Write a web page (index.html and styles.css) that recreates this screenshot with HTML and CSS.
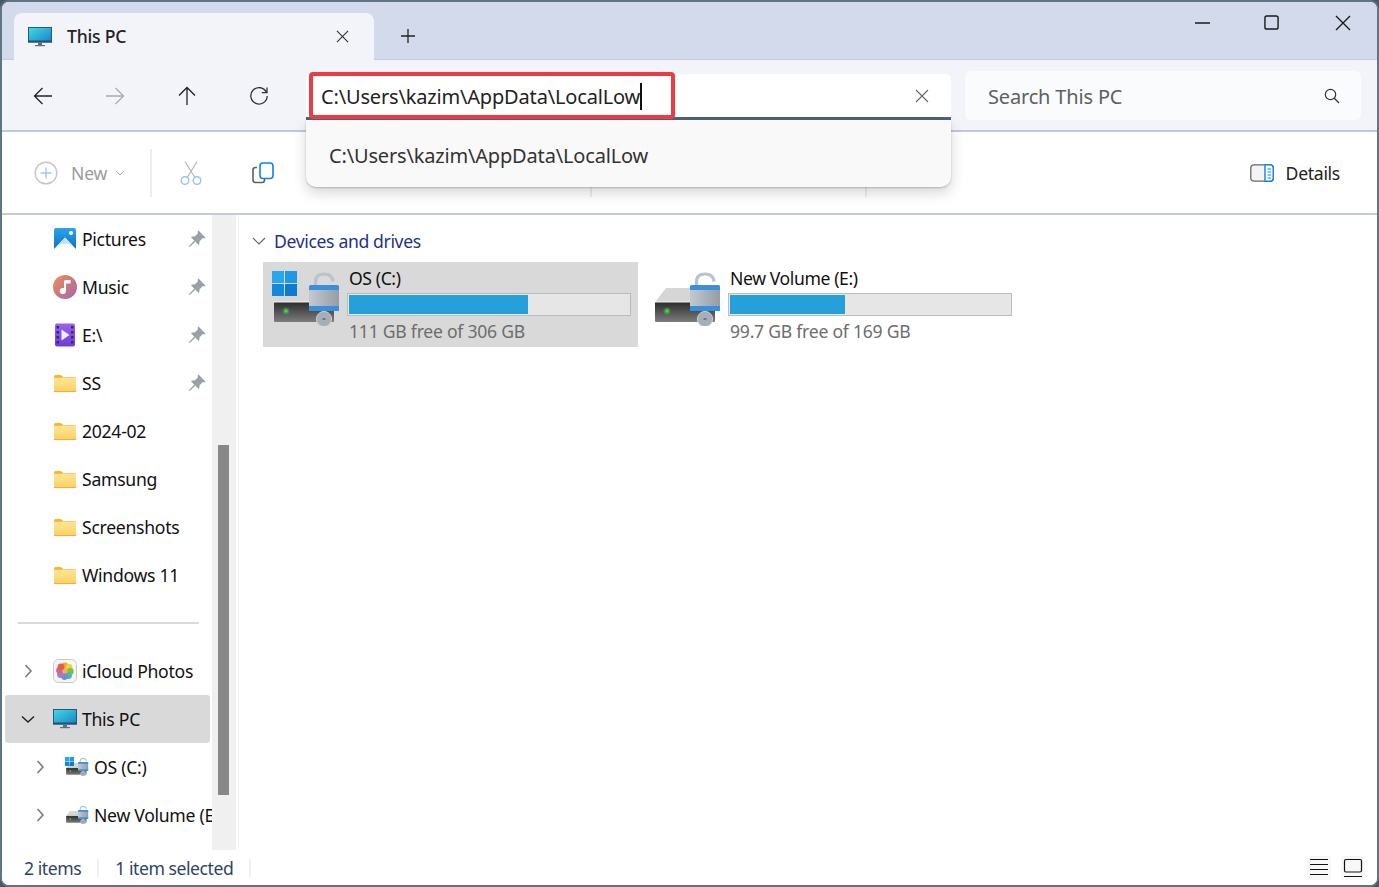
FILE: index.html
```html
<!DOCTYPE html>
<html>
<head>
  <meta charset="utf-8">
  <title>This PC</title>
  <link rel="stylesheet" href="styles.css">
</head>
<body>
  <svg class="defs" width="0" height="0">
    <defs>
      <linearGradient id="screen" x1="0" y1="0" x2="1" y2="1">
        <stop offset="0" stop-color="#3fdcea"/><stop offset="1" stop-color="#1a7fc6"/>
      </linearGradient>
      <linearGradient id="folderFill" x1="0" y1="0" x2="0" y2="1">
        <stop offset="0" stop-color="#ffe596"/><stop offset="1" stop-color="#fdcf60"/>
      </linearGradient>
      <linearGradient id="picFill" x1="0" y1="0" x2="0" y2="1">
        <stop offset="0" stop-color="#2aa5ea"/><stop offset="1" stop-color="#0e6cc6"/>
      </linearGradient>
      <linearGradient id="musicFill" x1="0" y1="0" x2="1" y2="1">
        <stop offset="0" stop-color="#f28f52"/><stop offset="1" stop-color="#a264b0"/>
      </linearGradient>
      <linearGradient id="filmFill" x1="0" y1="0" x2="0" y2="1">
        <stop offset="0" stop-color="#9a62ea"/><stop offset="1" stop-color="#6c3fd2"/>
      </linearGradient>
      <linearGradient id="driveFront" x1="0" y1="0" x2="0" y2="1">
        <stop offset="0" stop-color="#2b2b2b"/><stop offset="1" stop-color="#7d7d7d"/>
      </linearGradient>
      <linearGradient id="lockBody" x1="0" y1="0" x2="1" y2="0">
        <stop offset="0" stop-color="#c2cad1"/><stop offset="1" stop-color="#939da7"/>
      </linearGradient>

      <symbol id="monitor" viewBox="0 0 24 20">
        <rect x="0.5" y="0.5" width="23" height="14.5" fill="url(#screen)" stroke="#2a5a70"/>
        <rect x="0" y="13.5" width="24" height="2" fill="#1f5570"/>
        <rect x="10" y="15.5" width="4" height="2.5" fill="#5f6f7a"/>
        <rect x="7" y="18" width="10" height="1.2" fill="#5f6f7a"/>
      </symbol>

      <symbol id="folder" viewBox="0 0 22 17">
        <path d="M0 1.5Q0 0 1.5 0H7L9 2H22V5H0Z" fill="#f7b526"/>
        <rect x="0" y="2.5" width="22" height="14.5" fill="url(#folderFill)"/>
        <path d="M0 2.5H7.5L9 1.5H0Z" fill="#f7b526"/>
        <rect x="0" y="16" width="22" height="1" fill="#f0ae2e"/>
      </symbol>

      <symbol id="pin" viewBox="0 0 18 18">
        <path d="M10.5 0.6L17.2 7.2Q17.6 8 16.8 8.2L14.6 8.2L11.4 11.4L11.4 14.2Q11 15 10.2 14.5L3.4 7.7Q3 7 3.7 6.6L6.7 6.6L9.8 3.4L9.8 1Q10 0.2 10.5 0.6Z" fill="#98a1a7"/>
        <path d="M6.2 10.6L7.3 11.7L1.4 17.2L0.7 16.5Z" fill="#98a1a7"/>
      </symbol>

      <symbol id="drive" viewBox="0 0 70 56">
        <path d="M3 32L14 18H50V32Z" fill="#d6d6d6"/>
        <rect x="3" y="32" width="60" height="20" rx="1" fill="url(#driveFront)"/>
        <rect x="2.5" y="31" width="61" height="1.5" fill="#e8e8e8"/>
        <circle cx="15" cy="41" r="3.5" fill="#4fd14f" opacity="0.35"/>
        <circle cx="15" cy="41" r="1.8" fill="#35e035"/>
        <path d="M44.5 16V12C44.5 6 48 4 53 4C58 4 61.5 6 62 11.5" fill="none" stroke="#b9c3cb" stroke-width="3.2"/>
        <rect x="38" y="15" width="30" height="26" rx="2" fill="url(#lockBody)"/>
        <path d="M38 20V17Q38 15 40 15H66Q68 15 68 17V20Z" fill="#3a8fdc"/>
        <path d="M38 36V41H68V36Z" fill="#3a8fdc"/>
        <circle cx="53" cy="49" r="7.6" fill="#a7aeb5"/>
        <circle cx="53" cy="49" r="7.6" fill="none" stroke="#c9ced3"/>
        <rect x="51.5" y="48.4" width="3" height="1.2" fill="#555"/>
      </symbol>

      <symbol id="winlogo" viewBox="0 0 25 25">
        <rect x="0" y="0" width="12" height="12" fill="#2aa6ec"/>
        <rect x="13" y="0" width="12" height="12" fill="#1f98e6"/>
        <rect x="0" y="13" width="12" height="12" fill="#1488dc"/>
        <rect x="13" y="13" width="12" height="12" fill="#0e7bd2"/>
      </symbol>

      <symbol id="chevright" viewBox="0 0 12 16">
        <path d="M3.5 2L9 8L3.5 14" fill="none" stroke="currentColor" stroke-width="1.5"/>
      </symbol>
      <symbol id="chevdown" viewBox="0 0 16 12">
        <path d="M2 3.5L8 9L14 3.5" fill="none" stroke="currentColor" stroke-width="1.5"/>
      </symbol>
    </defs>
  </svg>

  <div class="window">
    <div class="titlebar">
      <div class="tab">
        <svg class="tab-icon"><use href="#monitor"/></svg>
        <span class="tab-name">This PC</span>
        <svg class="tab-close" viewBox="0 0 14 14"><path d="M1 1L13 13M13 1L1 13" stroke="#333" stroke-width="1.2"/></svg>
      </div>
      <svg class="tab-add" viewBox="0 0 14 14"><path d="M7 0V14M0 7H14" stroke="#222" stroke-width="1.3"/></svg>
      <div class="winctl">
        <svg viewBox="0 0 16 16"><path d="M0 8H15" stroke="#1a1a1a" stroke-width="1.4"/></svg>
        <svg class="winctl-max" viewBox="0 0 16 16"><rect x="1" y="1" width="14" height="14" rx="2" fill="none" stroke="#1a1a1a" stroke-width="1.5"/></svg>
        <svg viewBox="0 0 16 16"><path d="M1 1L15 15M15 1L1 15" stroke="#1a1a1a" stroke-width="1.4"/></svg>
      </div>
    </div>

    <div class="navbar">
      <div class="navbtn">
        <svg viewBox="0 0 20 20"><path d="M19 10H1.5M9.5 2L1.5 10L9.5 18" fill="none" stroke="#222" stroke-width="1.3"/></svg>
      </div>
      <div class="navbtn">
        <svg viewBox="0 0 20 20"><path d="M1 10H18.5M10.5 2L18.5 10L10.5 18" fill="none" stroke="#a8acb2" stroke-width="1.3"/></svg>
      </div>
      <div class="navbtn">
        <svg viewBox="0 0 20 20"><path d="M10 19V1.5M2 9.5L10 1.5L18 9.5" fill="none" stroke="#222" stroke-width="1.3"/></svg>
      </div>
      <div class="navbtn">
        <svg viewBox="0 0 20 20"><path d="M17.5 6.5A8.2 8.2 0 1 0 18.2 10M18 1.5V6.7H12.8" fill="none" stroke="#333" stroke-width="1.3"/></svg>
      </div>

      <div class="address">
        <div class="address-field">
          <span class="address-text">C:\Users\kazim\AppData\LocalLow</span><span class="caret"></span>
          <svg class="address-clear" viewBox="0 0 14 14"><path d="M1 1L13 13M13 1L1 13" stroke="#666" stroke-width="1.1"/></svg>
        </div>
        <div class="suggest"><span class="suggest-text">C:\Users\kazim\AppData\LocalLow</span></div>
        <div class="callout"></div>
      </div>

      <div class="search">
        <span class="search-text">Search This PC</span>
        <svg class="search-icon" viewBox="0 0 16 16"><circle cx="6.5" cy="6.5" r="5.2" fill="none" stroke="#333" stroke-width="1.2"/><path d="M10.3 10.3L15 15" stroke="#333" stroke-width="1.3"/></svg>
      </div>
    </div>

    <div class="cmdbar">
      <svg class="cmd-new" viewBox="0 0 24 24"><circle cx="12" cy="12" r="10.8" fill="none" stroke="#c6c6c6" stroke-width="1.4"/><path d="M12 6.5V17.5M6.5 12H17.5" stroke="#9ec7ec" stroke-width="1.4"/></svg>
      <span class="cmd-label">New</span>
      <svg class="cmd-drop" viewBox="0 0 10 6"><path d="M1 1L5 5L9 1" fill="none" stroke="#b0b0b0" stroke-width="1"/></svg>
      <div class="cmd-sep first"></div>
      <svg class="cmd-cut" viewBox="0 0 22 24">
        <path d="M5 0.5L14.5 16M17 0.5L7.5 16" fill="none" stroke="#b5b5b5" stroke-width="1.2"/>
        <circle cx="5" cy="19.5" r="3.8" fill="none" stroke="#92c4ee" stroke-width="1.4"/>
        <circle cx="17" cy="19.5" r="3.8" fill="none" stroke="#92c4ee" stroke-width="1.4"/>
      </svg>
      <svg class="cmd-copy" viewBox="0 0 22 22">
        <path d="M5 5.5H3.5Q1 5.5 1 8V18Q1 20.5 3.5 20.5H10Q12.5 20.5 12.5 18V17" fill="none" stroke="#5f5f5f" stroke-width="1.6"/>
        <rect x="8" y="1" width="13" height="15.5" rx="3" fill="#fff" stroke="#0f83e2" stroke-width="1.6"/>
      </svg>
      <div class="cmd-sep second"></div>
      <div class="cmd-sep third"></div>
      <svg class="cmd-details" viewBox="0 0 24 18">
        <rect x="0.8" y="0.8" width="22.4" height="16.4" rx="3" fill="#f4f4f4" stroke="#666" stroke-width="1.3"/>
        <path d="M15 0.8H20.2Q23.2 0.8 23.2 3.8V14.2Q23.2 17.2 20.2 17.2H15Z" fill="#fff" stroke="#0f83e2" stroke-width="1.4"/>
        <path d="M17.5 5H21M17.5 8H21M17.5 11H21M17.5 14H21" stroke="#0f83e2" stroke-width="1.2"/>
      </svg>
      <span class="cmd-details-label">Details</span>
    </div>

    <div class="main">
      <div class="sidebar">
        <div class="row">
          <span class="chev"></span>
          <svg class="item-icon" viewBox="0 0 24 24">
            <rect x="1" y="1" width="22" height="22" rx="2" fill="url(#picFill)"/>
            <path d="M1 22L12 10.5L23 22Q23 23 22 23H2Q1 23 1 22Z" fill="#fff"/>
            <path d="M5.5 18L12 10.5L18.5 18Q12 15.5 5.5 18Z" fill="#bfe3fa"/>
            <circle cx="18" cy="6" r="2" fill="#fff"/>
          </svg>
          <span class="item-name">Pictures</span>
          <svg class="pin"><use href="#pin"/></svg>
        </div>
        <div class="row">
          <span class="chev"></span>
          <svg class="item-icon" viewBox="0 0 24 24">
            <circle cx="12" cy="12" r="12" fill="url(#musicFill)"/>
            <path d="M12 5.5V15.5" stroke="#fff" stroke-width="2"/>
            <circle cx="9.8" cy="16" r="3.1" fill="#fff"/>
            <path d="M12 5H17.5V8.5H12Z" fill="#fff"/>
          </svg>
          <span class="item-name">Music</span>
          <svg class="pin"><use href="#pin"/></svg>
        </div>
        <div class="row">
          <span class="chev"></span>
          <svg class="item-icon" viewBox="0 0 24 24">
            <rect x="2" y="0.5" width="20" height="23" rx="2" fill="url(#filmFill)"/>
            <path d="M3.5 3H6V5.5H3.5ZM3.5 8H6V10.5H3.5ZM3.5 13H6V15.5H3.5ZM3.5 18H6V20.5H3.5ZM18 3H20.5V5.5H18ZM18 8H20.5V10.5H18ZM18 13H20.5V15.5H18ZM18 18H20.5V20.5H18Z" fill="#3c2390"/>
            <path d="M8.5 6.5L16.5 12L8.5 17.5Z" fill="#f3eefe"/>
          </svg>
          <span class="item-name">E:\</span>
          <svg class="pin"><use href="#pin"/></svg>
        </div>
        <div class="row">
          <span class="chev"></span>
          <svg class="folder-icon"><use href="#folder"/></svg>
          <span class="item-name">SS</span>
          <svg class="pin"><use href="#pin"/></svg>
        </div>
        <div class="row">
          <span class="chev"></span>
          <svg class="folder-icon"><use href="#folder"/></svg>
          <span class="item-name">2024-02</span>
        </div>
        <div class="row">
          <span class="chev"></span>
          <svg class="folder-icon"><use href="#folder"/></svg>
          <span class="item-name">Samsung</span>
        </div>
        <div class="row">
          <span class="chev"></span>
          <svg class="folder-icon"><use href="#folder"/></svg>
          <span class="item-name">Screenshots</span>
        </div>
        <div class="row">
          <span class="chev"></span>
          <svg class="folder-icon"><use href="#folder"/></svg>
          <span class="item-name">Windows 11</span>
        </div>

        <div class="divider"></div>

        <div class="row">
          <span class="chev"><svg class="chev-right"><use href="#chevright"/></svg></span>
          <svg class="item-icon" viewBox="0 0 24 24">
            <rect x="0.5" y="0.5" width="23" height="23" rx="5" fill="#f6f6f6" stroke="#c8c8c8"/>
            <circle cx="12" cy="7" r="3.4" fill="#f6a623"/>
            <circle cx="16" cy="8.5" r="3.4" fill="#e8d53c"/>
            <circle cx="17.3" cy="12.5" r="3.4" fill="#7cc04a"/>
            <circle cx="15.5" cy="16.5" r="3.4" fill="#4bb8a4"/>
            <circle cx="11.5" cy="17.5" r="3.4" fill="#6d8fd8"/>
            <circle cx="7.5" cy="15.5" r="3.4" fill="#a27cc8"/>
            <circle cx="6.5" cy="11.5" r="3.4" fill="#c86a9e"/>
            <circle cx="8" cy="8" r="3.4" fill="#e85a4a"/>
            <circle cx="12" cy="12" r="2.6" fill="#e9b45a"/>
          </svg>
          <span class="item-name">iCloud Photos</span>
        </div>
        <div class="row selected">
          <span class="chev"><svg class="chev-down"><use href="#chevdown"/></svg></span>
          <svg class="item-icon monitor-icon"><use href="#monitor"/></svg>
          <span class="item-name">This PC</span>
        </div>
        <div class="row sub">
          <span class="chev"><svg class="chev-right"><use href="#chevright"/></svg></span>
          <span class="drive-small">
            <svg class="drive-small-base"><use href="#drive"/></svg>
            <svg class="drive-small-logo"><use href="#winlogo"/></svg>
          </span>
          <span class="item-name">OS (C:)</span>
        </div>
        <div class="row sub">
          <span class="chev"><svg class="chev-right"><use href="#chevright"/></svg></span>
          <span class="drive-small">
            <svg class="drive-small-base"><use href="#drive"/></svg>
          </span>
          <span class="item-name">New Volume (E:)</span>
        </div>
      </div>

      <div class="scrolltrack"><div class="scrollthumb"></div></div>

      <div class="content">
        <div class="group-head">
          <svg class="group-chev" viewBox="0 0 14 8"><path d="M1 1L7 7L13 1" fill="none" stroke="#666" stroke-width="1.1"/></svg>
          <span class="group-title">Devices and drives</span>
        </div>
        <div class="tiles">
          <div class="tile active">
            <span class="tile-icon">
              <svg class="tile-drive"><use href="#drive"/></svg>
              <svg class="tile-logo"><use href="#winlogo"/></svg>
            </span>
            <div class="tile-info">
              <div class="tile-name">OS (C:)</div>
              <div class="bar"><div class="bar-fill" style="width: 64%"></div></div>
              <div class="tile-free">111 GB free of 306 GB</div>
            </div>
          </div>
          <div class="tile">
            <span class="tile-icon">
              <svg class="tile-drive"><use href="#drive"/></svg>
            </span>
            <div class="tile-info">
              <div class="tile-name">New Volume (E:)</div>
              <div class="bar"><div class="bar-fill" style="width: 41%"></div></div>
              <div class="tile-free">99.7 GB free of 169 GB</div>
            </div>
          </div>
        </div>
      </div>
    </div>

    <div class="statusbar">
      <span class="status-text">2 items</span>
      <span class="status-sep"></span>
      <span class="status-text">1 item selected</span>
      <span class="status-sep"></span>
      <div class="viewbtns">
        <span class="viewbtn"><svg viewBox="0 0 24 24"><path d="M3 3.5H21M3 8.5H21M3 13.5H21M3 18.5H21" stroke="#111" stroke-width="1.2"/></svg></span>
        <span class="viewbtn"><svg viewBox="0 0 24 24"><rect x="3.5" y="3.5" width="17" height="12.5" rx="1.5" fill="none" stroke="#111" stroke-width="1.2"/><path d="M3 20.5H21" stroke="#111" stroke-width="1.2"/></svg></span>
      </div>
    </div>
  </div>
</body>
</html>
```

FILE: styles.css
```css
* {
  box-sizing: border-box;
}

html, body {
  margin: 0;
  height: 100%;
}

body {
  background-color: #46596a;
  font-family: "Noto Sans", "Open Sans", sans-serif;
  font-size: 17.6px;
  letter-spacing: -0.2px;
  color: #111;
  overflow: hidden;
}

.defs {
  position: absolute;
}

svg {
  display: block;
  flex: none;
}

.window {
  width: 1379px;
  height: 887px;
  display: flex;
  flex-direction: column;
  border: 2px solid #5f7585;
  border-radius: 9px;
  background-color: #fff;
  overflow: hidden;
}

/* title bar */
.titlebar {
  height: 58px;
  padding: 11px 0 0 12px;
  display: flex;
  align-items: flex-start;
  background-color: #d3daeb;
  border-bottom: 1px solid #c3cbdf;
}

.tab {
  width: 360px;
  height: 47px;
  padding-left: 14px;
  display: flex;
  align-items: center;
  background-color: #f2f4fa;
  border-radius: 8px 8px 0 0;
}

.tab-icon {
  width: 24px;
  height: 20px;
}

.tab-name {
  margin-left: 15px;
  margin-bottom: 2px;
  font-weight: 500;
  color: #222;
}

.tab-close {
  width: 13px;
  height: 13px;
  margin-left: auto;
  margin-right: 25px;
}

.tab-add {
  width: 14px;
  height: 14px;
  margin: 16px 0 0 27px;
}

.winctl {
  margin-left: auto;
  padding: 2px 26px 0 0;
  display: flex;
  gap: 54px;
}

.winctl svg {
  width: 16px;
  height: 16px;
}

.winctl .winctl-max {
  width: 15px;
  height: 15px;
  margin: 0 2px 0 -1px;
}

/* address row */
.navbar {
  height: 72px;
  padding: 11px 0 0 5px;
  display: flex;
  align-items: flex-start;
  background-color: #f2f4fa;
  border-bottom: 2px solid #c0c8d8;
}

.navbtn {
  width: 72px;
  height: 49px;
  display: flex;
  align-items: center;
  justify-content: center;
}

.navbtn svg {
  width: 20px;
  height: 20px;
}

.address {
  position: relative;
  width: 645px;
  height: 46px;
  margin: 3px 0 0 11px;
}

.address-field {
  height: 46px;
  padding-left: 15px;
  display: flex;
  align-items: center;
  background-color: #fff;
  border-bottom: 3px solid #4f6473;
  border-radius: 5px 5px 0 0;
}

.address-text {
  margin-top: 2px;
  font-size: 20px;
  letter-spacing: -0.17px;
  color: #222;
}

.caret {
  width: 2px;
  height: 27px;
  margin-top: 2px;
  background-color: #111;
}

.address-clear {
  width: 14px;
  height: 14px;
  margin-left: auto;
  margin-right: 22px;
}

.suggest {
  position: absolute;
  top: 46px;
  left: 0;
  width: 100%;
  height: 67px;
  padding: 3px 0 0 23px;
  display: flex;
  align-items: center;
  background-color: #f9f9f9;
  border-radius: 0 0 10px 10px;
  box-shadow: 0 6px 14px rgba(0, 0, 0, 0.16), 0 1px 2px rgba(0, 0, 0, 0.2);
}

.suggest-text {
  font-size: 20px;
  letter-spacing: -0.17px;
  color: #333;
}

.callout {
  position: absolute;
  top: -2px;
  left: 3px;
  width: 366px;
  height: 47px;
  border: 4px solid #ee3b43;
  border-radius: 4px;
}

.search {
  width: 396px;
  height: 49px;
  margin-left: 14px;
  padding: 0 21px 0 23px;
  display: flex;
  align-items: center;
  justify-content: space-between;
  background-color: #fafbfd;
  border-radius: 6px;
}

.search-text {
  margin-top: 1px;
  font-size: 20px;
  letter-spacing: -0.17px;
  color: #5f5f5f;
}

.search-icon {
  width: 16px;
  height: 16px;
}

/* command bar */
.cmdbar {
  height: 83px;
  padding: 0 37px 0 32px;
  display: flex;
  align-items: center;
  background-color: #fff;
  border-bottom: 2px solid #c3cbd9;
}

.cmd-new {
  width: 24px;
  height: 24px;
}

.cmd-label {
  width: 36px;
  margin-left: 13px;
  color: #9b9b9b;
}

.cmd-drop {
  width: 10px;
  height: 6px;
  margin-left: 8px;
}

.cmd-sep {
  width: 2px;
  height: 48px;
  background-color: #ededed;
}

.cmd-sep.first {
  margin-left: 25px;
}

.cmd-sep.second {
  margin-left: 316px;
}

.cmd-sep.third {
  margin-left: 273px;
}

.cmd-cut {
  width: 22px;
  height: 24px;
  margin-left: 28px;
}

.cmd-copy {
  width: 22px;
  height: 22px;
  margin-left: 50px;
}

.cmd-details {
  width: 24px;
  height: 18px;
  margin-left: auto;
}

.cmd-details-label {
  margin-left: 12px;
  letter-spacing: -0.3px;
  color: #222;
}

/* main area */
.main {
  flex: 1;
  display: flex;
  min-height: 0;
}

.sidebar {
  width: 210px;
  flex: none;
  overflow: hidden;
}

.row {
  height: 48px;
  margin: 0 2px 0 3px;
  padding-right: 4px;
  display: flex;
  align-items: center;
  white-space: nowrap;
  letter-spacing: -0.28px;
  border-radius: 3px;
}

.row.selected {
  background-color: #d9d9d9;
}

.row.sub {
  padding-left: 12px;
  padding-right: 0;
}

.chev {
  width: 46px;
  flex: none;
  display: flex;
  justify-content: center;
  color: #777;
}

.selected .chev {
  color: #222;
}

.chev-right {
  width: 12px;
  height: 16px;
}

.chev-down {
  width: 16px;
  height: 12px;
}

.item-icon {
  width: 24px;
  height: 24px;
  margin-left: 2px;
}

.monitor-icon {
  height: 20px;
}

.folder-icon {
  width: 22px;
  height: 17px;
  margin: 0 1px 0 3px;
}

.item-name {
  margin-left: 5px;
  color: #111;
}

.pin {
  width: 18px;
  height: 18px;
  margin-left: auto;
}

.drive-small {
  position: relative;
  width: 24px;
  height: 20px;
  margin-left: 2px;
  flex: none;
}

.drive-small-base {
  width: 24px;
  height: 19px;
}

.drive-small-logo {
  position: absolute;
  top: 0;
  left: 0;
  width: 9px;
  height: 9px;
}

.row.sub .item-name {
  margin-left: 5px;
}

.divider {
  height: 2px;
  margin: 23px 13px 23px 16px;
  background-color: #d9d9d9;
}

.scrolltrack {
  width: 24px;
  flex: none;
  padding: 230px 7px 0 6px;
  background-color: #f0f0f0;
}

.scrollthumb {
  height: 350px;
  background-color: #888;
}

.content {
  flex: 1;
  margin-left: 2px;
  padding: 14px 0 0 13px;
  border-left: 1px solid #f2f2f2;
}

.group-head {
  height: 24px;
  display: flex;
  align-items: center;
}

.group-chev {
  width: 14px;
  height: 8px;
}

.group-title {
  margin-left: 8px;
  letter-spacing: -0.36px;
  color: #1f2f8f;
}

.tiles {
  margin: 9px 0 0 11px;
  display: flex;
  gap: 6px;
}

.tile {
  width: 375px;
  height: 85px;
  display: flex;
  padding: 8px 7px 0 8px;
}

.tile.active {
  background-color: #d9d9d9;
}

.tile-icon {
  position: relative;
  width: 76px;
  height: 56px;
  flex: none;
}

.tile-drive {
  width: 70px;
  height: 56px;
}

.tile-logo {
  position: absolute;
  top: 1px;
  left: 1px;
  width: 25px;
  height: 25px;
}

.tile-info {
  flex: 1;
}

.tile-name {
  height: 24px;
  margin-top: -1px;
  padding-left: 2px;
  line-height: 18px;
  letter-spacing: -0.4px;
  color: #111;
}

.bar {
  height: 23px;
  background-color: #e6e6e6;
  border: 1px solid #bcbcbc;
  padding: 1px;
}

.bar-fill {
  height: 100%;
  background-color: #26a0da;
}

.tile-free {
  margin-top: 3px;
  padding-left: 2px;
  line-height: 24px;
  letter-spacing: -0.25px;
  color: #6d6d6d;
}

/* status bar */
.statusbar {
  height: 35px;
  padding: 0 12px 0 22px;
  display: flex;
  align-items: center;
  background-color: #fff;
}

.status-text {
  letter-spacing: -0.45px;
  color: #2c4468;
}

.status-sep {
  width: 2px;
  height: 20px;
  margin: 0 16px;
  background-color: #f0f0f0;
}

.viewbtns {
  margin-left: auto;
  display: flex;
  gap: 10px;
}

.viewbtn {
  width: 24px;
  height: 24px;
  background-color: #f7f7f7;
  border-radius: 3px;
}

.viewbtn svg {
  width: 24px;
  height: 24px;
}
```
